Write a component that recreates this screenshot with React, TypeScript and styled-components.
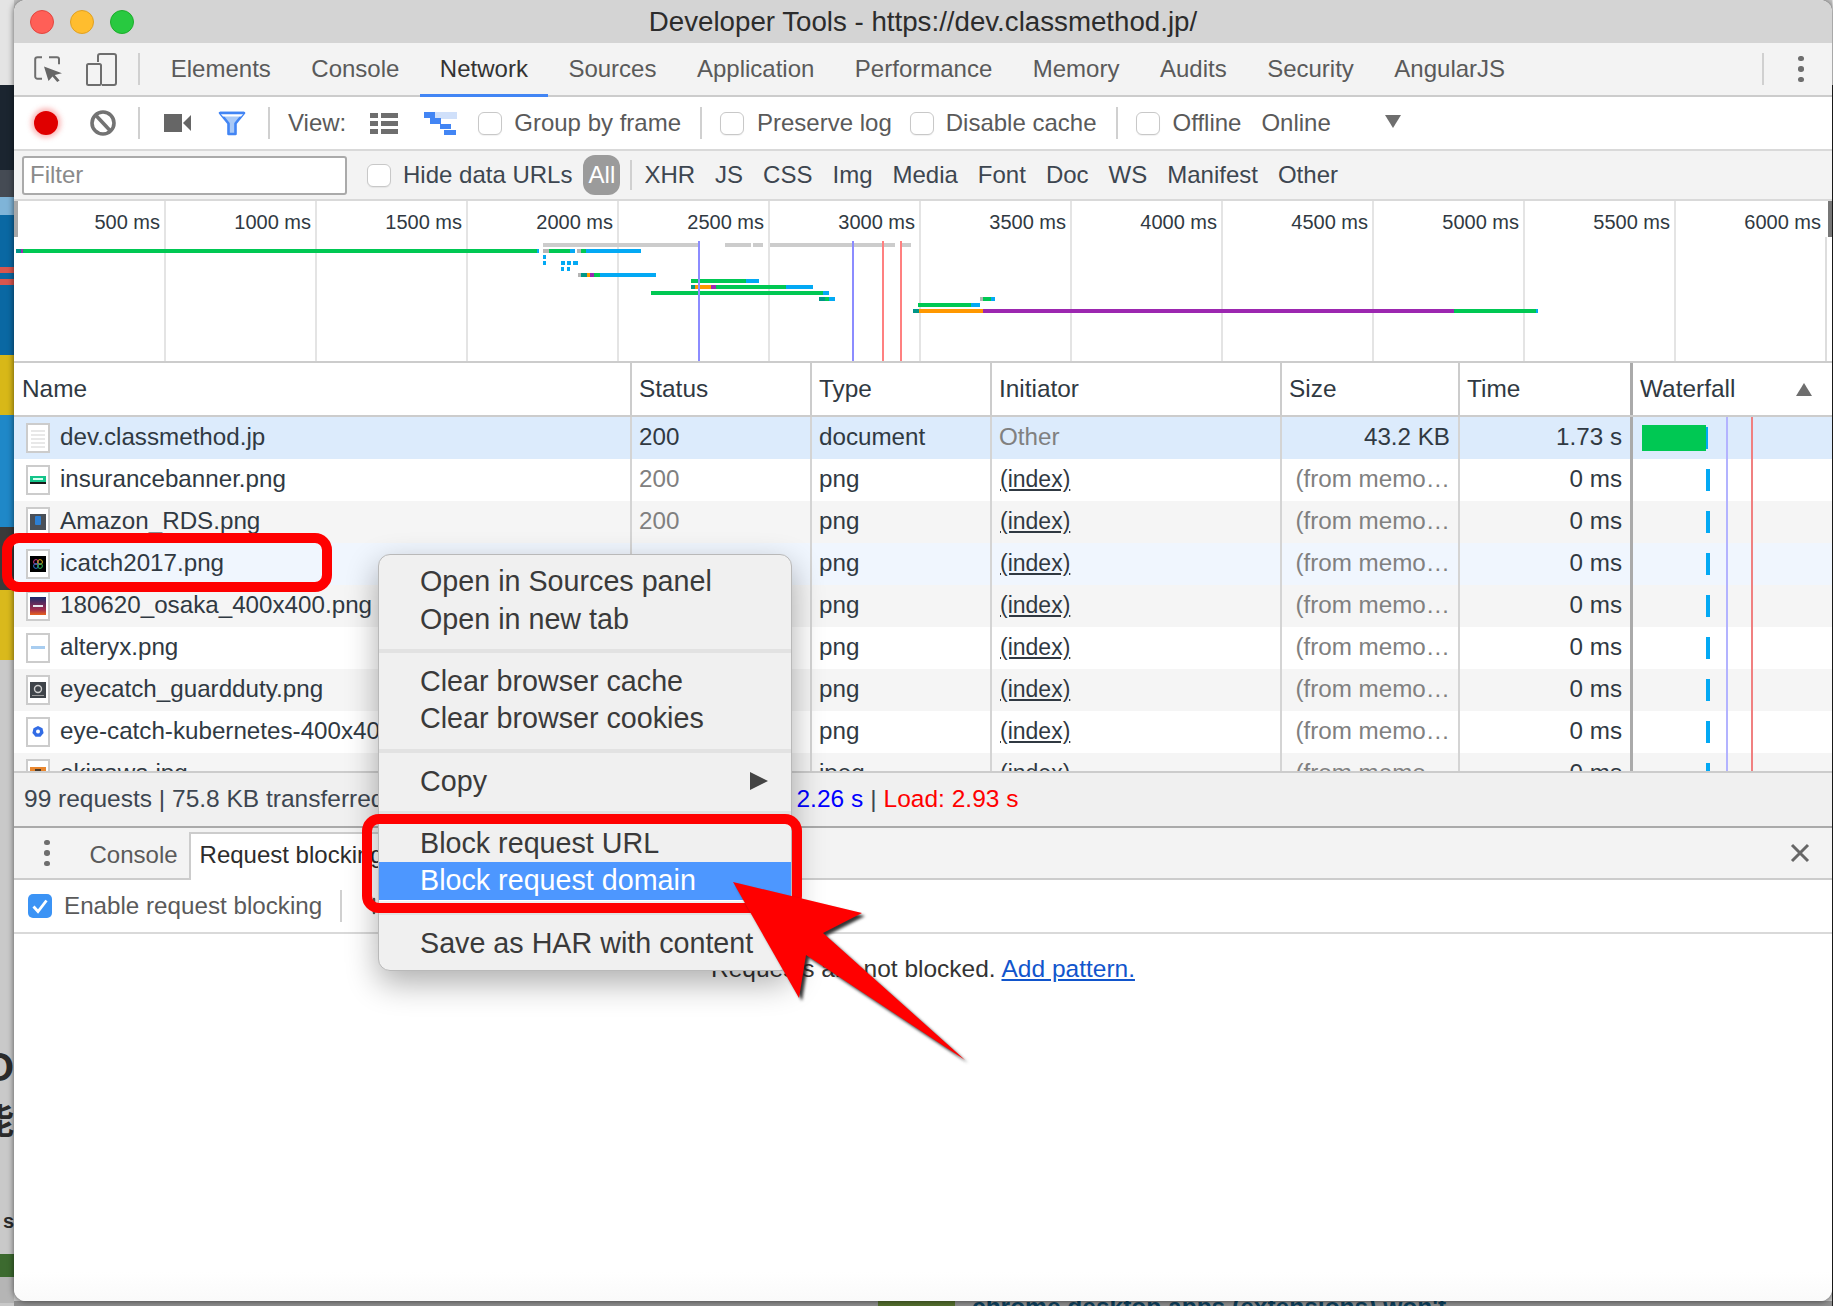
import React from "react";
import styled, { createGlobalStyle } from "styled-components";
import { Plus } from "lucide-react";

const GlobalStyle = createGlobalStyle`
  html, body {
    margin: 0;
    padding: 0;
    width: 1833px;
    height: 1306px;
    overflow: hidden;
    background: #c8c8c8;
    font-family: "Liberation Sans", Arial, sans-serif;
  }
  * { box-sizing: border-box; }
`;

const Desktop = styled.div`
  position: relative;
  width: 1833px;
  height: 1306px;
  display: grid;
  grid-template-columns: 14px 1818px 1px;
  grid-template-rows: 1301px 5px;
  overflow: hidden;
  background: #c8c8c8;
`;

const Strip = styled.div<{ $col: number }>`
  grid-column: ${(p) => p.$col};
  grid-row: 1 / 3;
  display: flex;
  flex-direction: column;
  overflow: hidden;
`;

const Band = styled.div<{ $h: number; $c: string }>`
  flex: none;
  height: ${(p) => p.$h}px;
  background: ${(p) => p.$c};
  display: flex;
  justify-content: flex-end;
  align-items: center;
  overflow: hidden;
  color: #2b2b2b;
  font-weight: 700;
  white-space: nowrap;
`;

const ClippedWord = styled.span<{ $size: number }>`
  font-size: ${(p) => p.$size}px;
  font-family: "Liberation Sans", "Noto Sans CJK JP", sans-serif;
  line-height: 1;
  flex: none;
`;

const BelowWindow = styled.div`
  grid-column: 2;
  grid-row: 2;
  display: flex;
  overflow: hidden;
  background: #8f8f8f;
`;

const BelowGreen = styled.div`
  margin-left: 864px;
  width: 77px;
  background: #55702f;
`;

const BelowText = styled.div`
  margin: -9px 0 0 17px;
  color: #0c3f5c;
  font-size: 24.5px;
  font-weight: 700;
  line-height: 30px;
  white-space: nowrap;
`;

const Window = styled.div`
  grid-column: 2;
  grid-row: 1;
  position: relative;
  z-index: 1;
  display: flex;
  flex-direction: column;
  overflow: hidden;
  background: #fff;
  border-radius: 12px;
  box-shadow: 0 0 6px rgba(0, 0, 0, 0.6);
  color: #303942;
`;

const TitleBar = styled.div`
  flex: none;
  height: 43px;
  background: #d4d4d4;
  display: grid;
  grid-template-columns: 1fr auto 1fr;
  align-items: center;
`;

const Lights = styled.div`
  display: flex;
  gap: 16px;
  padding-left: 16px;
`;

const Light = styled.span<{ $c: string; $b: string }>`
  width: 24px;
  height: 24px;
  border-radius: 50%;
  background: ${(p) => p.$c};
  border: 1px solid ${(p) => p.$b};
`;

const Title = styled.div`
  font-size: 27.7px;
  color: #2c2c2c;
  white-space: nowrap;
`;

const TabBar = styled.div`
  flex: none;
  height: 54px;
  background: #f3f3f3;
  border-bottom: 2px solid #ccc;
  display: flex;
  align-items: stretch;
  position: relative;
`;

const IconSlot = styled.div<{ $ml: number }>`
  flex: none;
  margin-left: ${(p) => p.$ml}px;
  display: flex;
  align-items: center;
  svg { display: block; }
`;

const Sep = styled.div<{ $ml: number; $h?: number }>`
  flex: none;
  align-self: center;
  margin-left: ${(p) => p.$ml}px;
  width: 2px;
  height: ${(p) => p.$h ?? 32}px;
  background: #d0d0d0;
`;

const PanelTab = styled.div<{ $active?: boolean }>`
  flex: none;
  padding: 0 20.25px;
  margin-bottom: -2px;
  display: flex;
  align-items: center;
  font-size: 24px;
  color: ${(p) => (p.$active ? "#333" : "#5a5a5a")};
  border-bottom: 3px solid ${(p) => (p.$active ? "#4285f4" : "transparent")};
`;

const PanelTabs = styled.div`
  display: flex;
  margin-left: 10.5px;
`;

const KebabDots = styled.div<{ $ml: number }>`
  margin-left: ${(p) => p.$ml}px;
  align-self: center;
  display: flex;
  flex-direction: column;
  gap: 5px;
  span {
    width: 5.5px;
    height: 5.5px;
    border-radius: 50%;
    background: #6e6e6e;
  }
`;

const Toolbar = styled.div`
  flex: none;
  height: 54px;
  background: #fff;
  border-bottom: 2px solid #d9d9d9;
  display: flex;
  align-items: center;
`;

const RecordDot = styled.div`
  margin-left: 20px;
  flex: none;
  width: 24px;
  height: 24px;
  border-radius: 50%;
  background: #e00000;
  box-shadow: 0 0 5px 3px rgba(240, 60, 60, 0.35);
`;

const ToolText = styled.span<{ $ml: number; $c?: string }>`
  flex: none;
  margin-left: ${(p) => p.$ml}px;
  font-size: 24px;
  color: ${(p) => p.$c ?? "#5a5a5a"};
  white-space: nowrap;
`;

const Check = styled.span<{ $ml: number }>`
  flex: none;
  margin-left: ${(p) => p.$ml}px;
  width: 24px;
  height: 23px;
  background: #fff;
  border: 1.5px solid #c8c8c8;
  border-radius: 6px;
  box-shadow: 0 1px 1px rgba(0, 0, 0, 0.06);
`;

const CaretDown = styled.span<{ $ml: number }>`
  flex: none;
  margin-left: ${(p) => p.$ml}px;
  margin-top: -4px;
  border-left: 8.5px solid transparent;
  border-right: 8.5px solid transparent;
  border-top: 13px solid #6e6e6e;
`;

const FilterBar = styled.div`
  flex: none;
  height: 50px;
  background: #f3f3f3;
  border-bottom: 2px solid #d9d9d9;
  display: flex;
  align-items: center;
`;

const FilterInput = styled.div`
  flex: none;
  margin-left: 8px;
  width: 325px;
  height: 39px;
  padding-left: 6px;
  background: #fff;
  border: 2px solid #aaa;
  border-radius: 3px;
  display: flex;
  align-items: center;
  color: #8a8a8a;
  font-size: 24px;
`;

const AllPill = styled.span`
  flex: none;
  margin-left: 11px;
  width: 37px;
  height: 40px;
  border-radius: 12px;
  background: #9b9b9b;
  color: #fff;
  display: flex;
  align-items: center;
  justify-content: center;
  font-size: 24px;
`;

const TypeList = styled.div`
  display: flex;
  gap: 20px;
  margin-left: 12px;
  font-size: 24px;
  color: #3d4650;
`;

const Overview = styled.div`
  flex: none;
  position: relative;
  height: 162px;
  background: #fff;
  border-bottom: 2px solid #ccc;
`;

const TickRow = styled.div`
  display: grid;
  grid-template-columns: repeat(12, 151px);
  height: 160px;
  margin-left: 1px;
`;

const Tick = styled.div`
  padding: 6px 4px 0 0;
  text-align: right;
  font-size: 20px;
  line-height: 30px;
  color: #303942;
  border-right: 2px solid #e4e4e4;
  &:last-child { border-right-color: #ddd; margin-top: 36px; padding-top: 0; }
`;

const LastTickLabel = styled.span`
  display: block;
  margin-top: -30px;
`;

const ChartLayer = styled.svg`
  position: absolute;
  left: 0;
  top: 0;
  width: 1818px;
  height: 160px;
`;

const Handle = styled.div<{ $side: "left" | "right"; $c: string }>`
  position: absolute;
  top: 0;
  ${(p) => p.$side}: 0;
  width: 4px;
  height: 36px;
  background: ${(p) => p.$c};
`;

const columns = "616px 180px 180px 290px 178px 172px 1fr";

const HeaderRow = styled.div`
  flex: none;
  display: grid;
  grid-template-columns: ${columns};
  height: 54px;
  background: #fff;
  border-bottom: 2px solid #ccc;
`;

const HeadCell = styled.div<{ $first?: boolean; $wf?: boolean }>`
  display: flex;
  align-items: center;
  justify-content: space-between;
  padding-left: ${(p) => (p.$first ? 8 : 7)}px;
  font-size: 24.4px;
  color: #303942;
  border-left: ${(p) =>
    p.$first ? "none" : p.$wf ? "3px solid #aaa" : "2px solid #ccc"};
`;

const SortCaret = styled.span`
  margin-right: 20px;
  border-left: 8px solid transparent;
  border-right: 8px solid transparent;
  border-bottom: 13px solid #6e6e6e;
`;

const RowsArea = styled.div`
  flex: none;
  position: relative;
  height: 354px;
  overflow: hidden;
`;

const DataRow = styled.div<{ $bg: string }>`
  display: grid;
  grid-template-columns: ${columns};
  height: 42px;
  background: ${(p) => p.$bg};
`;

const Cell = styled.div<{ $right?: boolean; $c?: string; $wf?: boolean; $first?: boolean }>`
  display: flex;
  align-items: center;
  justify-content: ${(p) => (p.$right ? "flex-end" : "flex-start")};
  padding: 0 ${(p) => (p.$right ? 8 : 0)}px 0 ${(p) => (p.$first ? 12 : 7)}px;
  font-size: 24.2px;
  white-space: nowrap;
  overflow: hidden;
  color: ${(p) => p.$c ?? "#303942"};
  border-left: ${(p) =>
    p.$first ? "none" : p.$wf ? "3px solid #aaa" : "2px solid #d4d4d4"};
`;

const CellText = styled.span`
  position: relative;
  top: -1.5px;
`;

const Initiator = styled(CellText)`
  top: -0.5px;
  margin-left: 1px;
  text-decoration: underline;
  font-size: 23px;
`;

const Thumb = styled.span`
  flex: none;
  width: 24px;
  height: 30px;
  margin-right: 10px;
  background: #fff;
  border: 2px solid #ccc;
  display: flex;
  align-items: center;
  justify-content: center;
  svg { display: block; }
`;

const WfMain = styled.span`
  margin-left: 2px;
  width: 64px;
  height: 26px;
  background: #00c853;
`;

const WfTail = styled.span`
  width: 2px;
  height: 22px;
  background: #03a9f4;
`;

const WfTick = styled.span`
  margin-left: 66px;
  width: 4px;
  height: 22px;
  background: #03a9f4;
`;

const EventLine = styled.div<{ $left: number; $c: string }>`
  position: absolute;
  top: 0;
  bottom: 0;
  left: ${(p) => p.$left}px;
  width: 2px;
  background: ${(p) => p.$c};
`;

const StatusBar = styled.div`
  flex: none;
  height: 55px;
  padding: 0 0 2px 10px;
  background: #f0f0f0;
  border-top: 2px solid #ccc;
  display: flex;
  align-items: center;
  font-size: 24.5px;
  color: #3d4650;
  white-space: nowrap;
`;

const StatusPart = styled.span<{ $c?: string; $ml?: number }>`
  margin-left: ${(p) => p.$ml ?? 0}px;
  color: ${(p) => p.$c ?? "inherit"};
`;

const DrawerTabs = styled.div`
  flex: none;
  height: 54px;
  background: #f3f3f3;
  border-top: 2px solid #aaa;
  border-bottom: 2px solid #ccc;
  display: flex;
  align-items: stretch;
`;

const DrawerTab = styled.div<{ $active?: boolean; $ml: number }>`
  flex: none;
  margin-left: ${(p) => p.$ml}px;
  margin-top: ${(p) => (p.$active ? 4 : 0)}px;
  margin-bottom: ${(p) => (p.$active ? -2 : 0)}px;
  width: ${(p) => (p.$active ? "440px" : "auto")};
  padding: ${(p) => (p.$active ? "0 0 5px 9px" : "4px 0 0")};
  display: flex;
  align-items: center;
  font-size: 24px;
  color: ${(p) => (p.$active ? "#2c2c2c" : "#5a5a5a")};
  background: ${(p) => (p.$active ? "#fff" : "transparent")};
  border-left: ${(p) => (p.$active ? "2px solid #ccc" : "none")};
  border-top: ${(p) => (p.$active ? "2px solid #ccc" : "none")};
`;

const CloseGlyph = styled.div<{ $ml: number }>`
  margin-left: ${(p) => p.$ml}px;
  align-self: center;
  svg { display: block; }
`;

const DrawerToolbar = styled.div`
  flex: none;
  height: 54px;
  background: #fff;
  border-bottom: 2px solid #d9d9d9;
  display: flex;
  align-items: center;
`;

const BlueCheck = styled.span`
  flex: none;
  margin-left: 14px;
  width: 24px;
  height: 24px;
  border-radius: 5px;
  background: #3b93f5;
  display: flex;
  align-items: center;
  justify-content: center;
`;

const BlockingLabel = styled(ToolText)`
  font-size: 24.2px;
`;

const DrawerBody = styled.div`
  flex: 1;
  padding-top: 20px;
  text-align: center;
  font-size: 24.5px;
  line-height: 30px;
  color: #333;
  background: linear-gradient(#fff 92%, #fafafa);
`;

const PatternLink = styled.a`
  margin-left: -1px;
  color: #1155cc;
  text-decoration: underline;
`;

const Menu = styled.div`
  position: absolute;
  left: 378px;
  top: 554px;
  z-index: 2;
  width: 414px;
  height: 417px;
  padding: 8px 0;
  border-radius: 12px;
  background: #f0f0f0;
  border: 1px solid #b9b9b9;
  box-shadow: 0 12px 32px rgba(0, 0, 0, 0.32);
  color: #3a3a3a;
  font-size: 28.7px;
`;

const MenuItem = styled.div<{ $active?: boolean }>`
  height: 37.67px;
  line-height: 37.67px;
  padding: 0 23px 0 41px;
  display: flex;
  align-items: center;
  justify-content: space-between;
  white-space: nowrap;
  color: ${(p) => (p.$active ? "#fff" : "inherit")};
  background: ${(p) => (p.$active ? "#4d97ff" : "transparent")};
  box-shadow: ${(p) => (p.$active ? "0 1px 0 #fff" : "none")};
`;

const MenuRule = styled.div`
  height: 4px;
  margin: 10.7px 0 9.8px;
  background: #e2e2e2;
`;

const SubmenuCaret = styled.span`
  border-top: 9.5px solid transparent;
  border-bottom: 9.5px solid transparent;
  border-left: 18px solid #444;
`;

const RedFrame = styled.div<{ $x: number; $y: number; $w: number; $h: number }>`
  position: absolute;
  z-index: 3;
  left: ${(p) => p.$x}px;
  top: ${(p) => p.$y}px;
  width: ${(p) => p.$w}px;
  height: ${(p) => p.$h}px;
  border: 10.5px solid #ff0000;
  border-radius: 17px;
`;

const ArrowLayer = styled.svg`
  position: absolute;
  z-index: 4;
  left: 0;
  top: 0;
  width: 1833px;
  height: 1306px;
  pointer-events: none;
  filter: drop-shadow(3px 3px 1.5px rgba(30, 30, 30, 0.9));
`;

const GREEN = "#00c853";
const BLUE = "#03a9f4";
const TEAL = "#009688";
const ORANGE = "#ff9800";
const PURPLE = "#9c27b0";
const GRAY = "#cccccc";

// [x1, x2, y, colour] in page pixels, the svg viewBox lines up with the page
const bars: [number, number, number, string][] = [
  [543, 698, 243, GRAY], [725, 751, 243, GRAY], [753, 763, 243, GRAY],
  [770, 895, 243, GRAY], [902, 911, 243, GRAY],
  [16, 21, 249, TEAL], [21, 23, 249, PURPLE], [23, 537, 249, GREEN], [537, 539, 249, BLUE],
  [543, 549, 249, "#b5b5b5"], [549, 570, 249, GREEN], [570, 575, 249, BLUE],
  [577, 581, 249, "#b5b5b5"], [581, 586, 249, GREEN], [586, 641, 249, BLUE],
  [543, 546, 255, BLUE],
  [543, 546, 261, BLUE], [561, 565, 261, BLUE], [567, 571, 261, BLUE], [573, 578, 261, BLUE],
  [561, 564, 267, BLUE], [567, 570, 267, BLUE],
  [578, 581, 273, "#b5b5b5"], [581, 587, 273, TEAL], [587, 590, 273, ORANGE],
  [590, 594, 273, PURPLE], [594, 600, 273, GREEN], [600, 656, 273, BLUE],
  [691, 746, 279, GREEN], [746, 759, 279, BLUE],
  [691, 695, 285, TEAL], [695, 711, 285, ORANGE], [711, 716, 285, PURPLE],
  [716, 786, 285, GREEN], [786, 813, 285, BLUE],
  [651, 823, 291, GREEN], [823, 829, 291, BLUE],
  [819, 825, 297, TEAL], [825, 829, 297, GREEN], [829, 835, 297, BLUE],
  [980, 983, 297, "#b5b5b5"], [983, 991, 297, GREEN], [991, 995, 297, BLUE],
  [918, 971, 303, GREEN], [971, 980, 303, BLUE],
  [913, 919, 309, TEAL], [919, 983, 309, ORANGE], [983, 1454, 309, PURPLE],
  [1454, 1536, 309, GREEN], [1536, 1538, 309, BLUE],
];

const ticks = ["500", "1000", "1500", "2000", "2500", "3000", "3500", "4000", "4500", "5000", "5500"];
const panels = ["Elements", "Console", "Network", "Sources", "Application", "Performance", "Memory", "Audits", "Security", "AngularJS"];
const types = ["XHR", "JS", "CSS", "Img", "Media", "Font", "Doc", "WS", "Manifest", "Other"];

type Request = { name: string; bg: string; thumb: React.ReactNode; type: string };

const DocThumb = (
  <svg width="16" height="22" viewBox="0 0 16 22">
    {[3, 7, 11, 15, 19].map((y) => (
      <rect key={y} x="1" y={y} width="14" height="2" fill="#e8e8e8" />
    ))}
  </svg>
);

const requests: Request[] = [
  { name: "dev.classmethod.jp", bg: "#dcebfc", type: "document", thumb: DocThumb },
  {
    name: "insurancebanner.png", bg: "#fff", type: "png",
    thumb: (
      <svg width="16" height="8" viewBox="0 0 16 8">
        <rect width="16" height="6" fill="#14c48a" />
        <rect x="3" y="2" width="10" height="2" fill="#d6fff0" />
        <rect y="6" width="16" height="2" fill="#1a1a1a" />
      </svg>
    ),
  },
  {
    name: "Amazon_RDS.png", bg: "#f5f5f5", type: "png",
    thumb: (
      <svg width="16" height="16" viewBox="0 0 16 16">
        <rect width="16" height="16" fill="#4a5058" />
        <rect x="5" y="2" width="6" height="9" rx="1" fill="#2d7fd3" />
      </svg>
    ),
  },
  {
    name: "icatch2017.png", bg: "#f0f6fe", type: "png",
    thumb: (
      <svg width="16" height="16" viewBox="0 0 16 16">
        <rect width="16" height="16" fill="#000" />
        <circle cx="6" cy="6" r="2.4" fill="none" stroke="#d43a8a" />
        <circle cx="10" cy="6" r="2.4" fill="none" stroke="#e0b020" />
        <circle cx="6" cy="10" r="2.4" fill="none" stroke="#2f78d8" />
        <circle cx="10" cy="10" r="2.4" fill="none" stroke="#2fb85a" />
      </svg>
    ),
  },
  {
    name: "180620_osaka_400x400.png", bg: "#f5f5f5", type: "png",
    thumb: (
      <svg width="16" height="18" viewBox="0 0 16 18">
        <defs>
          <linearGradient id="osaka" x1="0" y1="0" x2="0" y2="1">
            <stop offset="0" stopColor="#1c2a6b" />
            <stop offset="0.7" stopColor="#a12b4e" />
            <stop offset="1" stopColor="#e8641e" />
          </linearGradient>
        </defs>
        <rect width="16" height="18" fill="url(#osaka)" />
        <rect x="3" y="8" width="10" height="2" fill="#e6e6f0" />
      </svg>
    ),
  },
  {
    name: "alteryx.png", bg: "#fff", type: "png",
    thumb: (
      <svg width="16" height="4" viewBox="0 0 16 4">
        <rect x="1" width="14" height="3" fill="#a8cdf0" />
      </svg>
    ),
  },
  {
    name: "eyecatch_guardduty.png", bg: "#f5f5f5", type: "png",
    thumb: (
      <svg width="16" height="16" viewBox="0 0 16 16">
        <rect width="16" height="16" fill="#3f444a" />
        <circle cx="8" cy="7" r="3.5" fill="none" stroke="#cfcfcf" strokeWidth="1.4" />
        <rect x="2" y="13" width="12" height="1" fill="#9a9a9a" />
      </svg>
    ),
  },
  {
    name: "eye-catch-kubernetes-400x400.png", bg: "#fff", type: "png",
    thumb: (
      <svg width="16" height="16" viewBox="0 0 16 16">
        <path d="M8 2l4.5 2.2 1.1 4.8-3.1 3.8H5.500L2.400 9l1.100-4.800z" fill="#326ce5" />
        <circle cx="8" cy="7.500" r="2" fill="#fff" />
      </svg>
    ),
  },
  {
    name: "okinawa.jpg", bg: "#f5f5f5", type: "jpeg",
    thumb: (
      <svg width="16" height="14" viewBox="0 0 16 14">
        <rect width="16" height="14" fill="#e8862e" />
        <rect x="5" y="2" width="6" height="2" fill="#4a3a2a" />
      </svg>
    ),
  },
];

const InspectIcon = () => (
  <svg width="29" height="26" viewBox="0 0 29 26">
    <path d="M8 1.200H3.500a2.300 2.300 0 0 0-2.300 2.300v17a2.300 2.300 0 0 0 2.300 2.300H8" fill="none" stroke="#6e6e6e" strokeWidth="2" />
    <path d="M15 1.200h8a2 2 0 0 1 2 2v5" fill="none" stroke="#6e6e6e" strokeWidth="2" />
    <path d="M10 10.500l18 6.800-7.200 1.700 4.800 5.500-2.400 1.500-4.700-5.500-4 4.500z" fill="#666" />
  </svg>
);

const DeviceIcon = () => (
  <svg width="31" height="33" viewBox="0 0 31 33">
    <path d="M12 9V3a2 2 0 0 1 2-2h14a2 2 0 0 1 2 2v27a2 2 0 0 1-2 2H16" fill="none" stroke="#6e6e6e" strokeWidth="2" />
    <rect x="1" y="11" width="14" height="21" rx="1.500" fill="#f3f3f3" stroke="#6e6e6e" strokeWidth="2" />
  </svg>
);

const ClearIcon = () => (
  <svg width="26" height="28" viewBox="0 0 26 28">
    <circle cx="13" cy="14" r="11" fill="none" stroke="#737373" strokeWidth="3.600" />
    <path d="M6 6.500l14 15" stroke="#737373" strokeWidth="3.600" />
  </svg>
);

const CameraIcon = () => (
  <svg width="27" height="18" viewBox="0 0 27 18">
    <rect width="18" height="18" fill="#666" />
    <path d="M19 9l8-8v16z" fill="#666" />
  </svg>
);

const FunnelIcon = () => (
  <svg width="28" height="25" viewBox="0 0 28 25">
    <path d="M2 2h24l-8.500 10.500V23h-7V12.500z" fill="#a9c9f7" stroke="#4285f4" strokeWidth="2.600" strokeLinejoin="round" />
    <path d="M2 2h24l-3 3.500H5z" fill="#fff" />
    <path d="M2 2h24" stroke="#4285f4" strokeWidth="2.600" />
  </svg>
);

const ListIcon = () => (
  <svg width="28" height="21" viewBox="0 0 28 21">
    {[0, 8, 16].map((y) => (
      <g key={y} fill="#6e6e6e">
        <rect y={y} width="8" height="5" />
        <rect x="11" y={y} width="17" height="5" />
      </g>
    ))}
  </svg>
);

const WaterfallIcon = () => (
  <svg width="33" height="23" viewBox="0 0 33 23">
    <rect x="11" width="22" height="7" fill="#d0e0fa" />
    <rect width="11" height="6" fill="#4285f4" />
    <rect x="6" y="6" width="11" height="6" fill="#4285f4" />
    <rect x="16" y="12" width="11" height="5" fill="#4285f4" />
    <rect x="20" y="18" width="12" height="5" fill="#4285f4" />
  </svg>
);

const CloseIcon = () => (
  <svg width="20" height="20" viewBox="0 0 20 20">
    <path d="M2 2l16 16M18 2L2 18" stroke="#666" strokeWidth="3" />
  </svg>
);

const TickMark = () => (
  <svg width="18" height="16" viewBox="0 0 18 16">
    <path d="M2.500 8.500l4.500 5 8.500-11" fill="none" stroke="#fff" strokeWidth="2.800" />
  </svg>
);

const Dots = () => (
  <>
    <span />
    <span />
    <span />
  </>
);

export default function App() {
  return (
    <Desktop>
      <GlobalStyle />
      <Strip $col={1}>
        <Band $h={85} $c="#e4e4e4" />
        <Band $h={85} $c="#1b2530" />
        <Band $h={27} $c="#454b54" />
        <Band $h={18} $c="#7fb4d8" />
        <Band $h={52} $c="#0a68a3" />
        <Band $h={6} $c="#d9564e" />
        <Band $h={6} $c="#0a68a3" />
        <Band $h={6} $c="#d9564e" />
        <Band $h={70} $c="#0a68a3" />
        <Band $h={60} $c="#d8b818" />
        <Band $h={112} $c="#1f88c8" />
        <Band $h={63} $c="#3a3a3a" />
        <Band $h={70} $c="#d9b91c" />
        <Band $h={390} $c="#c9c9c9" />
        <Band $h={34} $c="#c9c9c9"><ClippedWord $size={40}>O</ClippedWord></Band>
        <Band $h={20} $c="#c9c9c9" />
        <Band $h={36} $c="#c9c9c9"><ClippedWord $size={36}>能</ClippedWord></Band>
        <Band $h={72} $c="#c9c9c9" />
        <Band $h={18} $c="#c9c9c9"><ClippedWord $size={20}>s</ClippedWord></Band>
        <Band $h={24} $c="#c9c9c9" />
        <Band $h={23} $c="#3c6a2f" />
        <Band $h={26} $c="#b5b5b5" />
      </Strip>

      <Window>
        <TitleBar>
          <Lights>
            <Light $c="#ff5f57" $b="#e2463f" />
            <Light $c="#ffbd2e" $b="#dfa023" />
            <Light $c="#28c940" $b="#1dad2b" />
          </Lights>
          <Title>Developer Tools - https://dev.classmethod.jp/</Title>
        </TitleBar>

        <TabBar>
          <IconSlot $ml={20}><InspectIcon /></IconSlot>
          <IconSlot $ml={23}><DeviceIcon /></IconSlot>
          <Sep $ml={21} />
          <PanelTabs>
            {panels.map((p) => (
              <PanelTab key={p} $active={p === "Network"}>{p}</PanelTab>
            ))}
          </PanelTabs>
          <Sep $ml={237} />
          <KebabDots $ml={34}><Dots /></KebabDots>
        </TabBar>

        <Toolbar>
          <RecordDot />
          <IconSlot $ml={32}><ClearIcon /></IconSlot>
          <Sep $ml={22} />
          <IconSlot $ml={24}><CameraIcon /></IconSlot>
          <IconSlot $ml={27}><FunnelIcon /></IconSlot>
          <Sep $ml={22} />
          <ToolText $ml={18}>View:</ToolText>
          <IconSlot $ml={24}><ListIcon /></IconSlot>
          <IconSlot $ml={26}><WaterfallIcon /></IconSlot>
          <Check $ml={21} />
          <ToolText $ml={12}>Group by frame</ToolText>
          <Sep $ml={19} />
          <Check $ml={18} />
          <ToolText $ml={13}>Preserve log</ToolText>
          <Check $ml={18} />
          <ToolText $ml={12}>Disable cache</ToolText>
          <Sep $ml={20} />
          <Check $ml={18} />
          <ToolText $ml={12}>Offline</ToolText>
          <ToolText $ml={20}>Online</ToolText>
          <CaretDown $ml={54} />
        </Toolbar>

        <FilterBar>
          <FilterInput>Filter</FilterInput>
          <Check $ml={20} />
          <ToolText $ml={12} $c="#3d4650">Hide data URLs</ToolText>
          <AllPill>All</AllPill>
          <Sep $ml={10} $h={30} />
          <TypeList>
            {types.map((t) => (
              <span key={t}>{t}</span>
            ))}
          </TypeList>
        </FilterBar>

        <Overview>
          <TickRow>
            {ticks.map((t) => (
              <Tick key={t}>{t} ms</Tick>
            ))}
            <Tick><LastTickLabel>6000 ms</LastTickLabel></Tick>
          </TickRow>
          <ChartLayer viewBox="14 201 1818 160">
            {bars.map(([x1, x2, y, c]) => (
              <rect key={`${x1}-${y}`} x={x1} y={y} width={x2 - x1} height={4} fill={c} />
            ))}
            <rect x="698" y="241" width="2" height="120" fill="#8c8cff" />
            <rect x="852" y="241" width="2" height="120" fill="#8c8cff" />
            <rect x="882" y="241" width="2" height="120" fill="#ff8080" />
            <rect x="900" y="241" width="2" height="120" fill="#ff8080" />
          </ChartLayer>
          <Handle $side="left" $c="#a8a8a8" />
          <Handle $side="right" $c="#777" />
        </Overview>

        <HeaderRow>
          <HeadCell $first>Name</HeadCell>
          <HeadCell>Status</HeadCell>
          <HeadCell>Type</HeadCell>
          <HeadCell>Initiator</HeadCell>
          <HeadCell>Size</HeadCell>
          <HeadCell>Time</HeadCell>
          <HeadCell $wf>Waterfall<SortCaret /></HeadCell>
        </HeaderRow>

        <RowsArea>
          {requests.map((r, i) => (
            <DataRow key={r.name} $bg={r.bg}>
              <Cell $first><Thumb>{r.thumb}</Thumb><CellText>{r.name}</CellText></Cell>
              <Cell $c={i === 0 ? undefined : "#808080"}><CellText>200</CellText></Cell>
              <Cell><CellText>{r.type}</CellText></Cell>
              {i === 0 ? <Cell $c="#808080"><CellText>Other</CellText></Cell> : <Cell><Initiator>(index)</Initiator></Cell>}
              <Cell $right $c={i === 0 ? undefined : "#808080"}><CellText>{i === 0 ? "43.2 KB" : "(from memo…"}</CellText></Cell>
              <Cell $right><CellText>{i === 0 ? "1.73 s" : "0 ms"}</CellText></Cell>
              <Cell $wf>
                {i === 0 ? (
                  <>
                    <WfMain />
                    <WfTail />
                  </>
                ) : (
                  <WfTick />
                )}
              </Cell>
            </DataRow>
          ))}
          <EventLine $left={1712} $c="#b3b3ff" />
          <EventLine $left={1737} $c="#f08080" />
        </RowsArea>

        <StatusBar>
          <StatusPart>99 requests | 75.8 KB transferred</StatusPart>
          <StatusPart $c="#0000ff" $ml={412}>2.26 s</StatusPart>
          <StatusPart $ml={7}>|</StatusPart>
          <StatusPart $c="#ff0000" $ml={7}>Load: 2.93 s</StatusPart>
        </StatusBar>

        <DrawerTabs>
          <KebabDots $ml={30}><Dots /></KebabDots>
          <DrawerTab $ml={40}>Console</DrawerTab>
          <DrawerTab $ml={11} $active>Request blocking</DrawerTab>
          <CloseGlyph $ml={1161}><CloseIcon /></CloseGlyph>
        </DrawerTabs>

        <DrawerToolbar>
          <BlueCheck><TickMark /></BlueCheck>
          <BlockingLabel $ml={12}>Enable request blocking</BlockingLabel>
          <Sep $ml={18} />
          <IconSlot $ml={20}><Plus size={24} color="#555" strokeWidth={2.5} /></IconSlot>
        </DrawerToolbar>

        <DrawerBody>
          Requests are not blocked. <PatternLink>Add pattern.</PatternLink>
        </DrawerBody>
      </Window>

      <BelowWindow>
        <BelowGreen />
        <BelowText>chrome desktop apps (extensions) won't</BelowText>
      </BelowWindow>

      <Strip $col={3}>
        <Band $h={85} $c="#e4e4e4" />
        <Band $h={1221} $c="#222" />
      </Strip>

      <Menu>
        <MenuItem>Open in Sources panel</MenuItem>
        <MenuItem>Open in new tab</MenuItem>
        <MenuRule />
        <MenuItem>Clear browser cache</MenuItem>
        <MenuItem>Clear browser cookies</MenuItem>
        <MenuRule />
        <MenuItem>Copy<SubmenuCaret /></MenuItem>
        <MenuRule />
        <MenuItem>Block request URL</MenuItem>
        <MenuItem $active>Block request domain</MenuItem>
        <MenuRule />
        <MenuItem>Save as HAR with content</MenuItem>
      </Menu>

      <RedFrame $x={2} $y={533} $w={330} $h={59} />
      <RedFrame $x={362} $y={814} $w={440} $h={99} />

      <ArrowLayer viewBox="0 0 1833 1306">
        <polygon points="733,882 862,913 823,933 965,1060 806,955 799,998" fill="#ff0000" />
      </ArrowLayer>
    </Desktop>
  );
}
